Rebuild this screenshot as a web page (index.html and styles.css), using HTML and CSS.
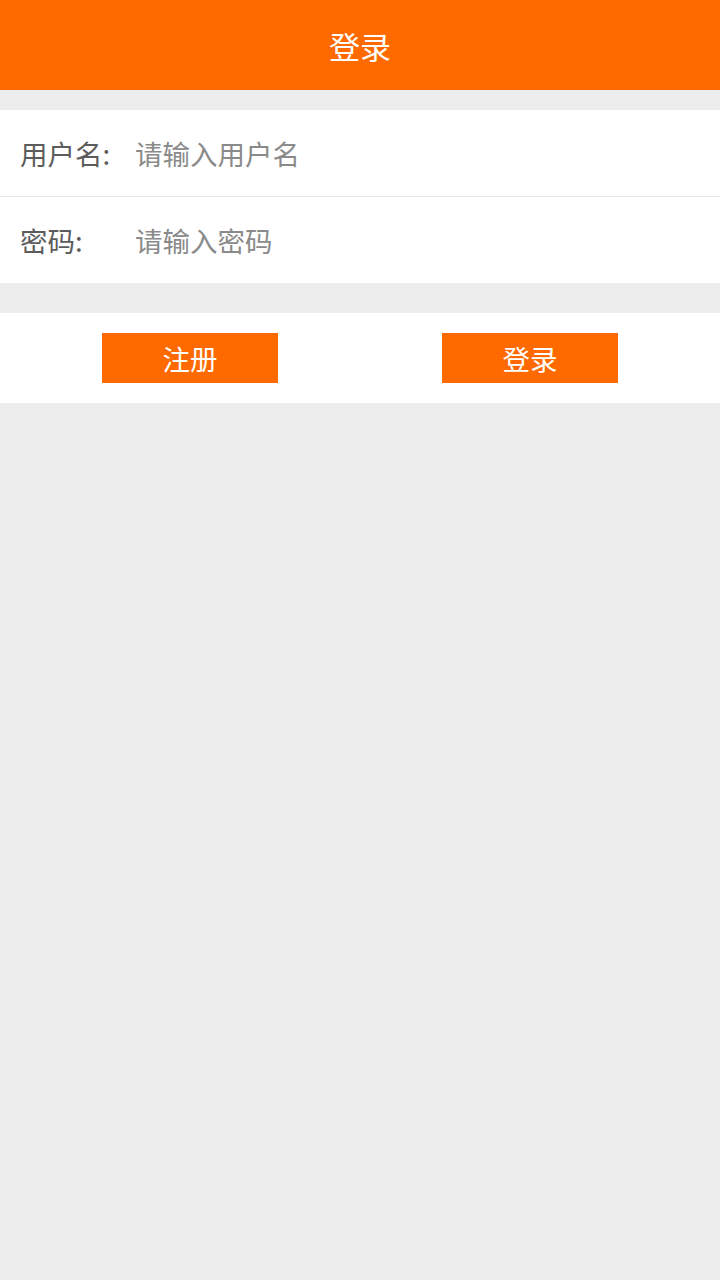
FILE: index.html
```html
<!DOCTYPE html>
<html lang="zh">
<head>
<meta charset="utf-8">
<link rel="stylesheet" href="styles.css">
</head>
<body>
<header class="topbar">登录</header>
<section class="form">
  <div class="row">
    <span class="label">用户名:</span>
    <input class="field" type="text" placeholder="请输入用户名">
  </div>
  <div class="row">
    <span class="label">密码:</span>
    <input class="field" type="password" placeholder="请输入密码">
  </div>
</section>
<section class="actions">
  <button class="btn">注册</button>
  <button class="btn">登录</button>
</section>
</body>
</html>
```

FILE: styles.css
```css
html, body {
  margin: 0;
  padding: 0;
  height: 100%;
  background: #ededed;
  font-family: "Noto Sans CJK SC", "Noto Sans", sans-serif;
}
.topbar {
  height: 90px;
  background: #ff6a00;
  color: #fff;
  font-size: 31px;
  display: flex;
  align-items: center;
  justify-content: center;
  line-height: 1;
}
.form {
  margin-top: 20px;
  background: #fff;
}
.row {
  height: 86px;
  display: flex;
  align-items: center;
  padding-left: 20px;
}
.row + .row {
  border-top: 1px solid #e6e6e6;
}
.label {
  width: 115px;
  font-size: 27.5px;
  color: #5c5c5c;
}
.field {
  flex: 1;
  border: none;
  outline: none;
  background: transparent;
  padding: 0;
  font-family: inherit;
  font-size: 27.5px;
  color: #333;
}
.field::placeholder {
  color: #8a8a8a;
}
.actions {
  margin-top: 30px;
  height: 90px;
  padding: 0 102px;
  background: #fff;
  display: flex;
  align-items: center;
  justify-content: space-between;
}
.btn {
  width: 176px;
  height: 50px;
  border: none;
  background: #ff6a00;
  color: #fff;
  font-family: inherit;
  font-size: 27.5px;
  padding: 0;
}
```
